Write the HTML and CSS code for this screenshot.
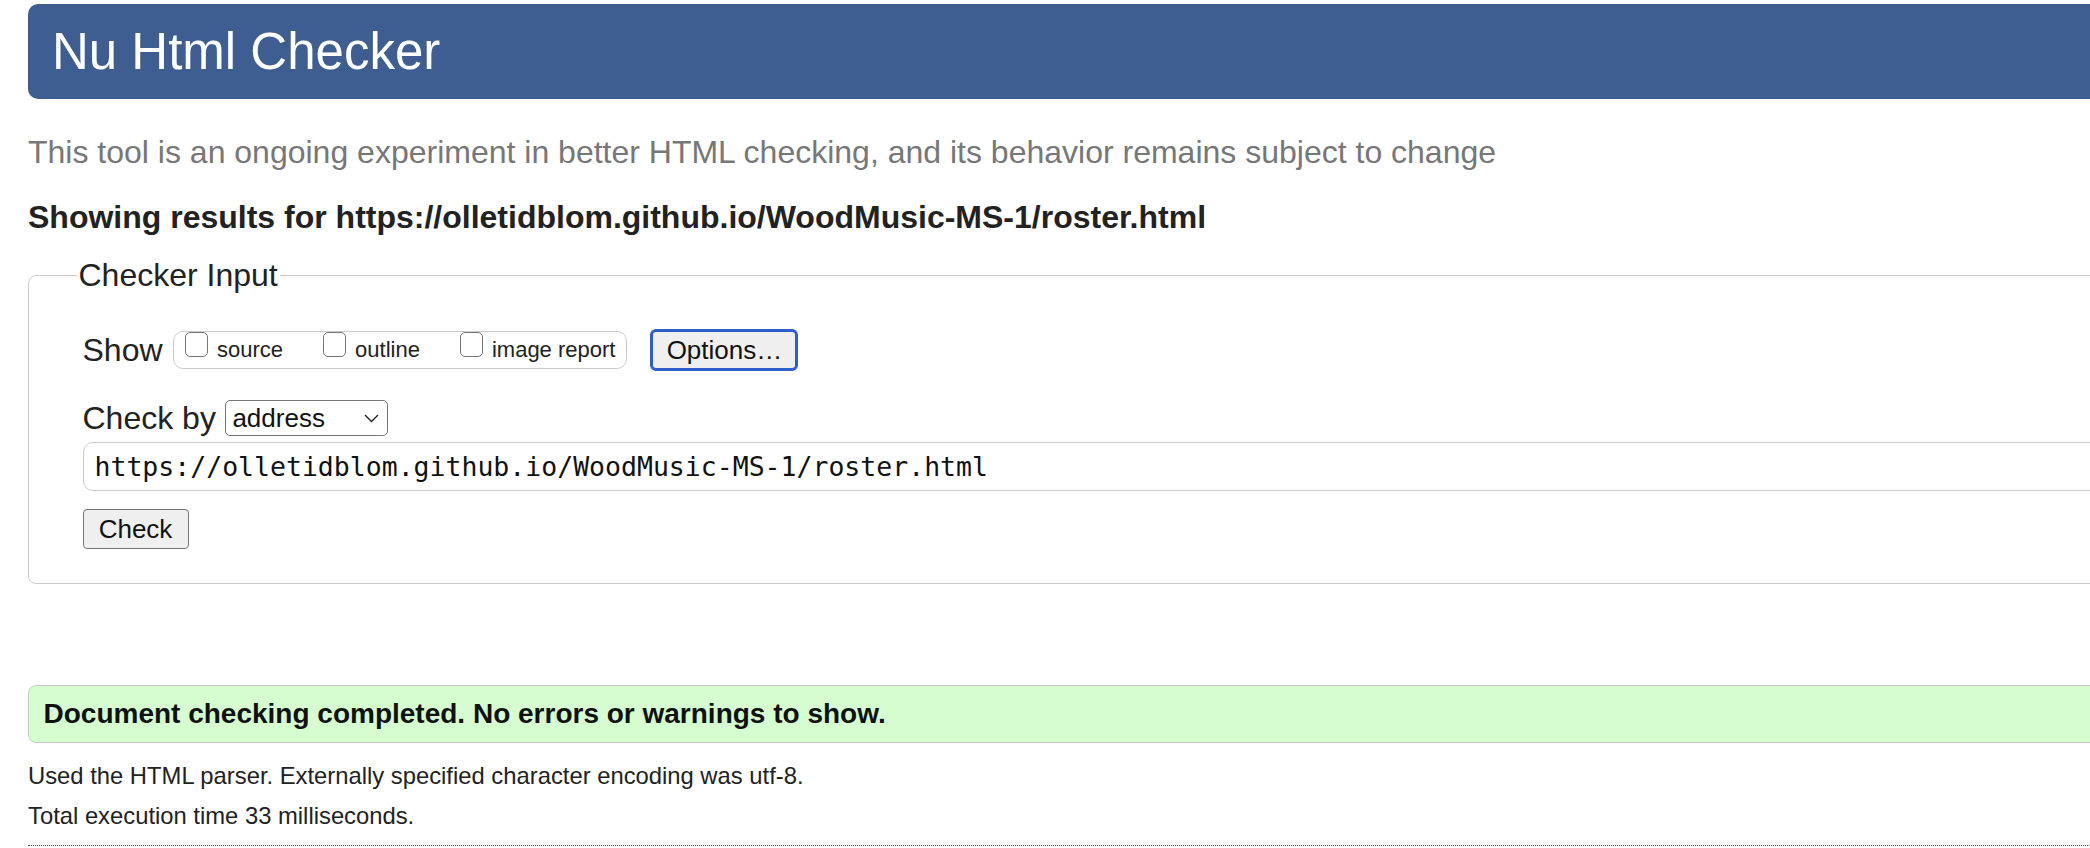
FILE: index.html
```html
<!DOCTYPE html>
<html lang="en">
<head>
<meta charset="utf-8">
<title>Showing results for https://olletidblom.github.io/WoodMusic-MS-1/roster.html - Nu Html Checker</title>
<link rel="stylesheet" href="styles.css">
</head>
<body>
<div class="page">
  <h1 class="title">Nu Html Checker</h1>
  <p class="tagline">This tool is an ongoing experiment in better HTML checking, and its behavior remains subject to change</p>
  <h2 class="results-for">Showing results for https://olletidblom.github.io/WoodMusic-MS-1/roster.html</h2>
  <form class="checker">
    <fieldset class="input-set">
      <legend class="input-legend">Checker Input</legend>
      <div class="show-row">
        <span class="row-label">Show</span>
        <div class="show-group">
          <label class="opt"><input type="checkbox" class="cb"><span class="opt-text">source</span></label>
          <label class="opt"><input type="checkbox" class="cb"><span class="opt-text">outline</span></label>
          <label class="opt"><input type="checkbox" class="cb"><span class="opt-text">image report</span></label>
        </div>
        <button type="button" class="btn btn-options">Options…</button>
      </div>
      <div class="by-row">
        <label class="row-label" for="docselect">Check by</label>
        <div class="select-wrap">
          <select id="docselect" class="select"><option>address</option></select>
          <svg class="chev" width="15" height="9" viewBox="0 0 15 9"><polyline points="1,1 7.5,7.5 14,1" fill="none" stroke="#222" stroke-width="1.4"/></svg>
        </div>
      </div>
      <input class="url" type="text" value="https://olletidblom.github.io/WoodMusic-MS-1/roster.html">
      <div class="check-row"><button type="button" class="btn btn-check">Check</button></div>
    </fieldset>
  </form>
  <div class="success"><p class="success-text">Document checking completed. No errors or warnings to show.</p></div>
  <p class="meta meta-first">Used the HTML parser. Externally specified character encoding was utf-8.</p>
  <p class="meta meta-second">Total execution time 33 milliseconds.</p>
  <hr class="dotted">
</div>
</body>
</html>
```

FILE: styles.css
```css
html, body {
  margin: 0;
  padding: 0;
  overflow: hidden;
  background: #fff;
}

body {
  font-family: "Liberation Sans", Arial, Helvetica, sans-serif;
  color: #222;
}

.page {
  width: 2240px;
  padding: 4px 0 0 28px;
}

.title {
  margin: 0;
  height: 95px;
  line-height: 95px;
  padding-left: 24px;
  background: #3e5e92;
  border-radius: 10px;
  color: #fff;
  font-size: 51px;
  font-weight: normal;
}

.tagline {
  margin: 33px 0 0;
  font-size: 32px;
  line-height: 40px;
  color: #777;
}

.results-for {
  margin: 25px 0 0;
  font-size: 32px;
  line-height: 40px;
  font-weight: bold;
  color: #222;
}

.checker {
  margin: 0;
}

.input-set {
  margin: 18px 0 0;
  padding: 34px 0 34px 53.5px;
  border: 1.5px solid #ccc;
  border-radius: 8px;
  min-width: 0;
}

.input-legend {
  margin-left: -6px;
  padding: 0 2px;
  font-size: 32px;
  line-height: 40px;
  color: #222;
}

.show-row {
  display: flex;
  align-items: center;
  height: 42px;
}

.row-label {
  font-size: 32px;
  line-height: 40px;
  color: #222;
}

.show-group {
  display: flex;
  align-items: flex-start;
  box-sizing: border-box;
  height: 38px;
  margin-left: 10px;
  padding: 0 11px 0 11.5px;
  border: 1.5px solid #ccc;
  border-radius: 10px;
  gap: 40px;
}

.opt {
  display: flex;
  align-items: flex-start;
  gap: 9px;
}

.cb {
  appearance: none;
  -webkit-appearance: none;
  box-sizing: border-box;
  width: 23px;
  height: 25px;
  margin: 0;
  border: 1.5px solid #767676;
  border-radius: 5px;
  background: #fff;
}

.opt-text {
  font-size: 22px;
  line-height: 35px;
  color: #222;
}

.btn {
  font-family: "Liberation Sans", Arial, Helvetica, sans-serif;
  font-size: 26px;
  color: #111;
  background: #efefef;
  box-sizing: border-box;
  padding: 0;
}

.btn-options {
  margin-left: 23px;
  width: 148px;
  height: 42px;
  border: 3px solid #2c5fcb;
  border-radius: 6px;
}

.by-row {
  display: flex;
  align-items: center;
  height: 40px;
  margin-top: 27px;
}

.select-wrap {
  position: relative;
  margin-left: 9px;
  width: 163px;
  height: 36px;
}

.select {
  appearance: none;
  -webkit-appearance: none;
  box-sizing: border-box;
  width: 163px;
  height: 36px;
  margin: 0;
  padding: 0 0 0 6.5px;
  border: 1.5px solid #767676;
  border-radius: 5px;
  background: #fff;
  font-family: "Liberation Sans", Arial, Helvetica, sans-serif;
  font-size: 26px;
  color: #111;
}

.chev {
  position: absolute;
  right: 9px;
  top: 14px;
  pointer-events: none;
}

.url {
  display: block;
  box-sizing: border-box;
  width: 2120px;
  height: 49px;
  margin: 4px 0 0;
  padding: 0 0 0 11px;
  border: 1.5px solid #ccc;
  border-radius: 10px;
  font-family: "DejaVu Sans Mono", "Liberation Mono", monospace;
  font-size: 26.5px;
  color: #111;
  background: #fff;
}

.check-row {
  margin-top: 18px;
}

.btn-check {
  width: 106px;
  height: 40px;
  border: 1.5px solid #767676;
  border-radius: 4px;
}

.success {
  margin-top: 100.5px;
  box-sizing: border-box;
  height: 58px;
  padding-left: 14.5px;
  border: 1.5px solid #c8c8c8;
  border-radius: 8px;
  background: #d5fdd0;
}

.success-text {
  margin: 0;
  font-size: 28px;
  line-height: 55px;
  font-weight: bold;
  color: #111;
}

.meta {
  margin: 0;
  font-size: 23.8px;
  line-height: 28px;
  color: #222;
}

.meta-first {
  margin-top: 19px;
}

.meta-second {
  margin-top: 12px;
}

.dotted {
  margin: 15px 0 0;
  height: 0;
  border: 0;
  border-top: 1px dotted #555;
}
```
